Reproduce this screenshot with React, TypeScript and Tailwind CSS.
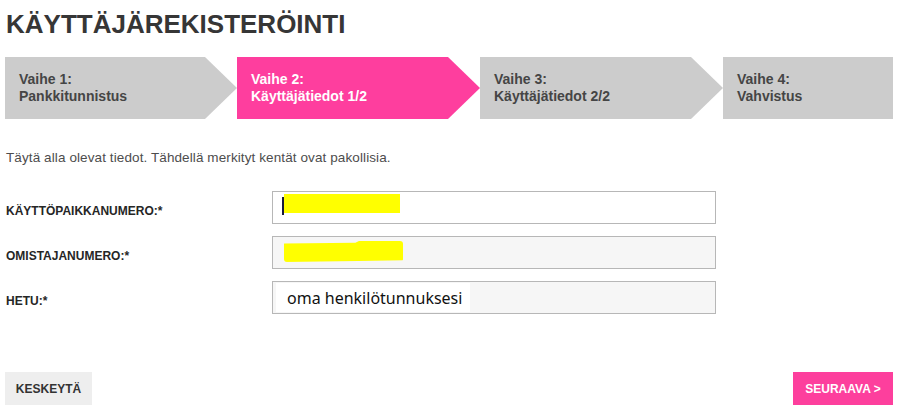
const steps = [
  { title: 'Vaihe 1:', sub: 'Pankkitunnistus', active: false, w: 'w-[232px]', arrow: true },
  { title: 'Vaihe 2:', sub: 'Käyttäjätiedot 1/2', active: true, w: 'w-[243px]', arrow: true },
  { title: 'Vaihe 3:', sub: 'Käyttäjätiedot 2/2', active: false, w: 'w-[243px]', arrow: true },
  { title: 'Vaihe 4:', sub: 'Vahvistus', active: false, w: 'w-[170px]', arrow: false },
]

const Steps = () => (
  <div className="flex h-[62px] mt-[18px]">
    {steps.map((s) => (
      <div
        key={s.title}
        className={`${s.w} h-full flex flex-col justify-center pl-[14px] text-[14px] leading-[17px] font-bold ${
          s.active ? 'bg-[#fe3e9e] text-white' : 'bg-[#cccccc] text-[#454545]'
        } ${
          s.arrow
            ? '[clip-path:polygon(0_0,calc(100%_-_32px)_0,100%_50%,calc(100%_-_32px)_100%,0_100%)]'
            : ''
        }`}
      >
        <span>{s.title}</span>
        <span>{s.sub}</span>
      </div>
    ))}
  </div>
)

const Row = ({ label, children, bg }: { label: string; children?: React.ReactNode; bg: string }) => (
  <div className="flex items-center h-[33px]">
    <label className="w-[267px] mt-[6px] text-[12px] font-bold text-[#262626] pl-[1px]">{label}</label>
    <div className={`relative w-[444px] h-full border border-[#b7b7b7] ${bg} flex items-center`}>{children}</div>
  </div>
)

export default function App() {
  return (
    <div className="w-[900px] h-[415px] bg-white pl-[5px] pr-[7px] font-['Liberation_Sans',Arial,sans-serif] overflow-hidden">
      <h1 className="pt-[9px] pl-[1px] text-[26px] leading-[30px] font-bold text-[#363636]">
        KÄYTTÄJÄREKISTERÖINTI
      </h1>

      <Steps />

      <p className="mt-[31px] pl-[1px] text-[13.5px] leading-[16px] tracking-[0.1px] text-[#4d4d4d]">
        Täytä alla olevat tiedot. Tähdellä merkityt kentät ovat pakollisia.
      </p>

      <div className="mt-[25px] flex flex-col gap-[12px]">
        <Row label="KÄYTTÖPAIKKANUMERO:*" bg="bg-white">
          <span className="absolute left-[9px] top-[5px] w-[1.5px] h-[18px] bg-[#1a1a3a]" />
          <span className="absolute left-[11px] top-[2px] w-[116px] h-[19px] bg-[#ffff00]" />
        </Row>
        <Row label="OMISTAJANUMERO:*" bg="bg-[#f6f6f6]">
          <span className="absolute left-[11px] top-[4px] w-[119px] h-[21px] bg-[#ffff00] rounded-[3px] [clip-path:polygon(0_12%,60%_8%,63%_0,100%_0,100%_92%,62%_95%,0_100%)]" />
        </Row>
        <Row label="HETU:*" bg="bg-[#f6f6f6]">
          <span className="ml-[3px] pl-[11px] pr-[8px] h-[29px] flex items-center bg-white font-['Noto_Sans',sans-serif] text-[16px] text-[#111]">
            oma henkilötunnuksesi
          </span>
        </Row>
      </div>

      <div className="mt-[58px] flex justify-between">
        <button className="h-[33px] w-[87px] bg-[#eeeeee] text-[12px] font-bold text-[#333]">KESKEYTÄ</button>
        <button className="h-[33px] w-[100px] bg-[#fd3f9d] text-[12px] font-bold text-white">SEURAAVA &gt;</button>
      </div>
    </div>
  )
}
